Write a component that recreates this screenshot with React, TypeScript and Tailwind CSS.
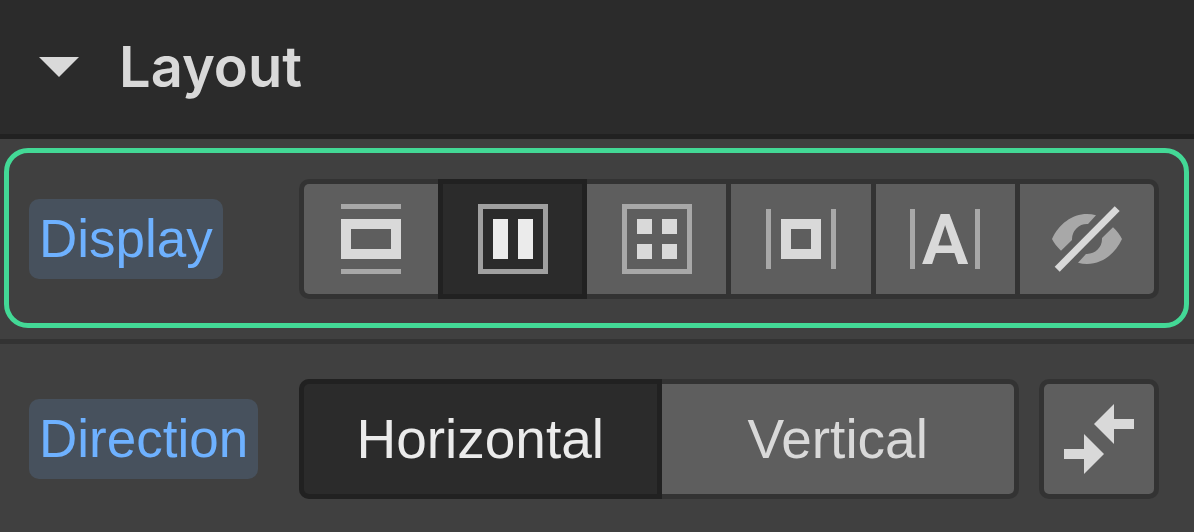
import { useState, type ReactNode } from 'react';
import clsx from 'clsx';

const displayOptions: { id: string; label: string; icon: ReactNode }[] = [
  {
    id: 'block',
    label: 'Block',
    icon: (
      <svg width="60" height="70" viewBox="0 0 60 70" fill="none" aria-hidden="true">
        <path d="M0 0h60v5H0zM0 65h60v5H0z" fill="#a8a8a8" />
        <path d="M5 20h50v30H5z" stroke="#d9d9d9" strokeWidth="10" />
      </svg>
    ),
  },
  {
    id: 'flex',
    label: 'Flex',
    icon: (
      <svg width="70" height="70" viewBox="0 0 70 70" fill="none" aria-hidden="true">
        <path d="M2.5 2.5h65v65h-65z" stroke="#a0a0a0" strokeWidth="5" />
        <path d="M15 15h15v40H15zM40 15h15v40H40z" fill="#ebebeb" />
      </svg>
    ),
  },
  {
    id: 'grid',
    label: 'Grid',
    icon: (
      <svg width="70" height="70" viewBox="0 0 70 70" fill="none" aria-hidden="true">
        <path d="M2.5 2.5h65v65h-65z" stroke="#a8a8a8" strokeWidth="5" />
        <path d="M15 15h15v15H15zM40 15h15v15H40zM15 40h15v15H15zM40 40h15v15H40z" fill="#d9d9d9" />
      </svg>
    ),
  },
  {
    id: 'inline-block',
    label: 'Inline block',
    icon: (
      <svg width="70" height="70" viewBox="0 0 70 70" fill="none" aria-hidden="true">
        <path d="M0 5h5v60H0zM65 5h5v60h-5z" fill="#a8a8a8" />
        <path d="M20 20h30v30H20z" stroke="#d9d9d9" strokeWidth="10" />
      </svg>
    ),
  },
  {
    id: 'inline',
    label: 'Inline',
    icon: (
      <svg width="70" height="90" viewBox="0 -10 70 90" fill="none" className="overflow-visible" aria-hidden="true">
        <path d="M0 5h5v60H0zM65 5h5v60h-5z" fill="#a8a8a8" />
        <text x="35" y="60" textAnchor="middle" fill="#d9d9d9" className="font-['Roboto',sans-serif] text-[70px] font-semibold">
          A
        </text>
      </svg>
    ),
  },
  {
    id: 'none',
    label: 'None',
    icon: (
      <svg width="70" height="70" viewBox="0 0 70 70" fill="none" aria-hidden="true">
        <path
          d="M0 35C7 20 20 10 35 10C38 10 41 10.4 44 11.3L36 20H35A15 15 0 0 0 20 35V36L9 46.7C5 43 2 39 0 35Z"
          fill="#a8a8a8"
        />
        <path
          d="M70 35C63 50 50 60 35 60C32 60 29 59.6 26 58.7L34 50H35A15 15 0 0 0 50 35V34L61 23.3C65 27 68 31 70 35Z"
          fill="#a8a8a8"
        />
        <path d="M5.2 65.2L65.2 4.6" stroke="#d9d9d9" strokeWidth="7" />
      </svg>
    ),
  },
];

const directions = ['Horizontal', 'Vertical'];

interface SegmentProps {
  active: boolean;
  label?: string;
  onClick: () => void;
  children: ReactNode;
}

function Segment({ active, label, onClick, children }: SegmentProps) {
  return (
    <button
      type="button"
      aria-label={label}
      aria-pressed={active}
      onClick={onClick}
      className={clsx(
        'flex min-w-0 items-center justify-center first:rounded-l-[5px] last:rounded-r-[5px]',
        active ? 'bg-[#2b2b2b] text-[#ebebeb] ring-[5px] ring-[#212121]' : 'bg-[#5e5e5e] text-[#d9d9d9]'
      )}
    >
      {children}
    </button>
  );
}

function PropertyLabel({ id, children }: { id: string; children: ReactNode }) {
  return (
    <div className="w-[270px] shrink-0">
      <span id={id} className="inline-block rounded-[10px] bg-[#47515d] px-[10px] text-[53px] leading-[80px] text-[#6eb1ff] align-top">
        {children}
      </span>
    </div>
  );
}

export default function App() {
  const [open, setOpen] = useState(true);
  const [display, setDisplay] = useState('flex');
  const [direction, setDirection] = useState('Horizontal');
  const [reversed, setReversed] = useState(false);

  return (
    <div className="min-h-screen bg-[#404040] font-['Liberation_Sans',Arial,sans-serif]">
      <h2 className="border-b-[5px] border-[#212121] bg-[#2b2b2b]">
        <button
          type="button"
          aria-expanded={open}
          onClick={() => setOpen(!open)}
          className="flex w-full items-center gap-10 py-[31px] pl-[39px] text-[#d9d9d9]"
        >
          <svg width="40" height="20" viewBox="0 0 40 20" aria-hidden="true">
            <path d="M0 0h40L20 20z" fill="currentColor" />
          </svg>
          <span className="font-['Inter',sans-serif] text-[56px] leading-[72px] font-semibold">Layout</span>
        </button>
      </h2>

      {open && (
        <>
          {/* Display */}
          <div className="border-b-[5px] border-[#333333] pt-[9px] pr-[5px] pb-[11px] pl-1">
            <div className="flex items-center rounded-[24px] border-[5px] border-[#43d996] pt-[26px] pr-[25px] pb-6 pl-5">
              <PropertyLabel id="display-label">Display</PropertyLabel>
              <div
                role="group"
                aria-labelledby="display-label"
                className="grid h-[120px] flex-1 grid-cols-[134fr_139fr_139fr_139fr_139fr_134fr] gap-[5px] rounded-[10px] bg-[#333333] p-[5px]"
              >
                {displayOptions.map((option) => (
                  <Segment
                    key={option.id}
                    label={option.label}
                    active={display === option.id}
                    onClick={() => setDisplay(option.id)}
                  >
                    {option.icon}
                  </Segment>
                ))}
              </div>
            </div>
          </div>

          {/* Direction */}
          <div className="flex items-center py-[35px] pr-[35px] pl-[29px]">
            <PropertyLabel id="direction-label">Direction</PropertyLabel>
            <div className="flex flex-1 gap-5">
              <div
                role="group"
                aria-labelledby="direction-label"
                className="grid h-[120px] flex-1 grid-cols-2 gap-[5px] rounded-[10px] bg-[#333333] p-[5px] text-[55px]"
              >
                {directions.map((name) => (
                  <Segment key={name} active={direction === name} onClick={() => setDirection(name)}>
                    {name}
                  </Segment>
                ))}
              </div>
              <button
                type="button"
                aria-label="Reverse direction"
                aria-pressed={reversed}
                onClick={() => setReversed(!reversed)}
                className="flex size-[120px] shrink-0 items-center justify-center rounded-[10px] border-[5px] border-[#333333] bg-[#5e5e5e] text-[#d9d9d9]"
              >
                <svg width="70" height="70" viewBox="0 0 70 70" fill="currentColor" aria-hidden="true">
                  <path d="M30 20L50 0v15h20v10H50v15zM0 45h20V30l20 20-20 20V55H0z" />
                </svg>
              </button>
            </div>
          </div>
        </>
      )}
    </div>
  );
}
